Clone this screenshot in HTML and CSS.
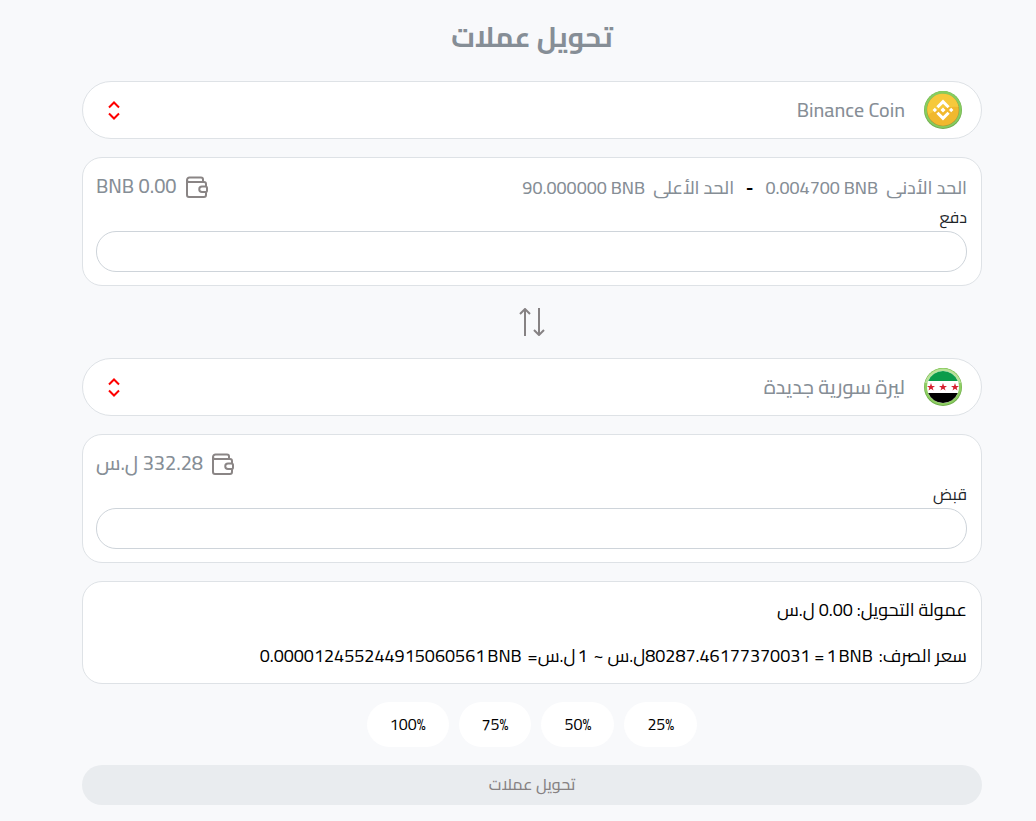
FILE: index.html
```html
<!DOCTYPE html>
<html lang="ar" dir="rtl">
<head>
<meta charset="utf-8">
<meta name="viewport" content="width=device-width, initial-scale=1">
<title>تحويل عملات</title>
<link rel="stylesheet" href="styles.css">
</head>

<body>

<form class="exchange">
<h1 class="title">تحويل عملات</h1>

<div class="picker">
<svg class="coin" viewBox="0 0 38 38" aria-hidden="true">
<circle cx="19" cy="19" r="19" fill="#72ad50"/>
<circle cx="19" cy="18.5" r="18.5" fill="#86cd5f"/>
<circle cx="19" cy="19" r="16.2" fill="#a59a3c"/>
<circle cx="19" cy="19" r="15.7" fill="#f1b82e"/>
<path d="M3.3 19a15.700 15.700 0 0 1 31.200-3C25 15 12 18 4.200 24z" fill="#f6c93c"/>
<path d="M13.400 16.200L19 10.600l5.600 5.600M13.400 21.800L19 27.400l5.600-5.600" fill="none" stroke="#fff" stroke-width="3"/>
<path d="M19 16.400l2.600 2.600-2.600 2.600-2.600-2.600zM10.800 16.800L13 19l-2.200 2.200L8.600 19zM27.200 16.800L29.400 19l-2.200 2.200L25 19z" fill="#fff"/>
</svg>
<select class="currency" aria-label="عملة الدفع">
<option>Binance Coin</option>
</select>
<svg class="chevrons" viewBox="0 0 12 20" aria-hidden="true"><path d="M1 7.500l5-5 5 5M1 13.500l5 5 5-5"/></svg>
</div>

<div class="card">
<div class="info">
<div class="limits">
<span>الحد الأدنى</span>
<bdi dir="ltr">0.004700 BNB</bdi>
<b class="dash">-</b>
<span>الحد الأعلى</span>
<bdi dir="ltr">90.000000 BNB</bdi>
</div>
<div class="balance">
<svg class="wallet" viewBox="0 0 22 22" aria-hidden="true"><path d="M1 4v15a2 2 0 0 0 2 2h15a2 2 0 0 0 2-2v-3M20 10V8a2 2 0 0 0-2-2H3a2 2 0 0 1-2-2 2.500 2.500 0 0 1 2.500-2.500H15a2 2 0 0 1 2 2V6M16 10.500h3.500a1.500 1.500 0 0 1 1.500 1.500v2.500a1.500 1.500 0 0 1-1.500 1.500H16a2.700 2.700 0 0 1 0-5.500z"/></svg>
<span>0.00 BNB</span>
</div>
</div>
<label class="label" for="pay">دفع</label>
<input class="amount" id="pay" type="text" inputmode="decimal">
</div>

<button class="swap" type="button" aria-label="تبديل">
<svg class="arrows" viewBox="0 0 26 28" aria-hidden="true"><path d="M6 28V1M1 6l5-5 5 5M20 0v27M15 22l5 5 5-5"/></svg>
</button>

<div class="picker">
<svg class="coin" viewBox="0 0 38 38" aria-hidden="true">
<circle cx="19" cy="19" r="19" fill="#6fae4b"/>
<circle cx="19" cy="18.5" r="18.5" fill="#8fcf63"/>
<path d="M1 15a18.5 18.5 0 0 1 36 0z" fill="#b9e29a"/>
<circle cx="19" cy="19" r="16" fill="#fff"/>
<path d="M4.2 13a16 16 0 0 1 29.600 0z" fill="#0b9c4a"/>
<path d="M4.2 25a16 16 0 0 0 29.600 0z" fill="#000"/>
<g fill="#d5202f">
<path id="star" d="M19 15l1 2.900h3l-2.400 1.800.9 2.900-2.500-1.800-2.500 1.800.9-2.900L15 17.900h3z"/>
<use href="#star" x="-12"/>
<use href="#star" x="12"/>
</g>
</svg>
<select class="currency" aria-label="عملة القبض">
<option>ليرة سورية جديدة</option>
</select>
<svg class="chevrons" viewBox="0 0 12 20" aria-hidden="true"><path d="M1 7.500l5-5 5 5M1 13.500l5 5 5-5"/></svg>
</div>

<div class="card">
<div class="info">
<div class="balance">
<svg class="wallet" viewBox="0 0 22 22" aria-hidden="true"><path d="M1 4v15a2 2 0 0 0 2 2h15a2 2 0 0 0 2-2v-3M20 10V8a2 2 0 0 0-2-2H3a2 2 0 0 1-2-2 2.500 2.500 0 0 1 2.500-2.500H15a2 2 0 0 1 2 2V6M16 10.500h3.500a1.500 1.500 0 0 1 1.500 1.500v2.500a1.500 1.500 0 0 1-1.500 1.500H16a2.700 2.700 0 0 1 0-5.500z"/></svg>
<span>332.28 ل.س</span>
</div>
</div>
<label class="label" for="receive">قبض</label>
<input class="amount" id="receive" type="text" inputmode="decimal">
</div>

<div class="card summary">
<p class="line">عمولة التحويل: 0.00 ل.س</p>
<p class="line">سعر الصرف: <bdi class="rate" dir="ltr"><span>1</span><span>BNB</span></bdi>= <bdi dir="ltr">80287.46177370031</bdi>ل.س ~ <bdi class="rate">1</bdi>ل.س= <bdi class="rate" dir="ltr"><span>0.000012455244915060561</span><span>BNB</span></bdi></p>
</div>

<div class="percents">
<button class="percent" type="button" dir="ltr">25%</button>
<button class="percent" type="button" dir="ltr">50%</button>
<button class="percent" type="button" dir="ltr">75%</button>
<button class="percent" type="button" dir="ltr">100%</button>
</div>

<button class="submit" type="submit" disabled>تحويل عملات</button>
</form>

</body>
</html>
```
FILE: styles.css
```css
*{
box-sizing:border-box;}
body{
margin:0;
padding:15px 54px 16px 82px;
background:#f8f9fb;
color:#000;
font-family:Cairo,"Open Sans","DejaVu Sans",sans-serif;
font-size:18px;}
button,input,select{
font-family:inherit;}
.exchange{
display:flex;
flex-direction:column;
gap:18px;}
.title{
margin:0 0 4px;
color:#868e96;
font-size:28px;
line-height:44px;
text-align:center;}

.picker{
display:flex;
align-items:center;
gap:19px;
height:58px;
padding:0 19px 0 25px;
background:#fff;
border:1px solid #dee2e6;
border-radius:29px;}
.coin{
width:38px;
height:38px;}
.currency{
flex:1;
min-width:0;
height:40px;
padding:0 0 2px;
appearance:none;
background:none;
border:0;
color:#868e96;
font-size:20px;
font-weight:500;}
.chevrons{
width:12px;
height:20px;
fill:none;
stroke:#f00;
stroke-width:2;}

.card{
display:flex;
flex-direction:column;
padding:13px 14px 13px 13px;
background:#fff;
border:1px solid #dee2e6;
border-radius:20px;}
.info{
display:flex;
align-items:center;
height:32px;
color:#868e96;
font-weight:500;}
.limits{
display:flex;
align-items:center;
gap:8px;}
.dash{
padding:0 4px;
color:#000;}
.balance{
display:flex;
align-items:center;
gap:9px;
margin-right:auto;
font-size:20px;
line-height:34px;}
.balance span{
padding-bottom:2px;}
.wallet{
width:22px;
height:22px;
fill:none;
stroke:#8a8585;
stroke-width:2;}
.label{
color:#212529;
font-size:16px;
line-height:28px;}
.amount{
width:100%;
height:41px;
padding:0 16px;
background:#fff;
border:1px solid #ced4da;
border-radius:20px;
font-size:16px;}

.swap{
align-self:center;
display:flex;
padding:4px 0;
background:none;
border:0;}
.arrows{
width:26px;
height:28px;
fill:none;
stroke:#868283;
stroke-width:2;}

.summary{
gap:16px;
padding-bottom:12px;}
.line{
margin:0;
line-height:30px;}
.rate{
display:inline-flex;
gap:2px;
margin:0 2px;}

.percents{
display:flex;
justify-content:center;
gap:10px;}
.percent{
height:45px;
padding:0 23px 2px;
background:#fff;
border:0;
border-radius:23px;
color:#000;
font-size:16px;}
.submit{
height:40px;
padding:0 0 2px;
background:#e9ecef;
border:0;
border-radius:20px;
color:#868283;
font-size:16px;
font-weight:500;}
```
